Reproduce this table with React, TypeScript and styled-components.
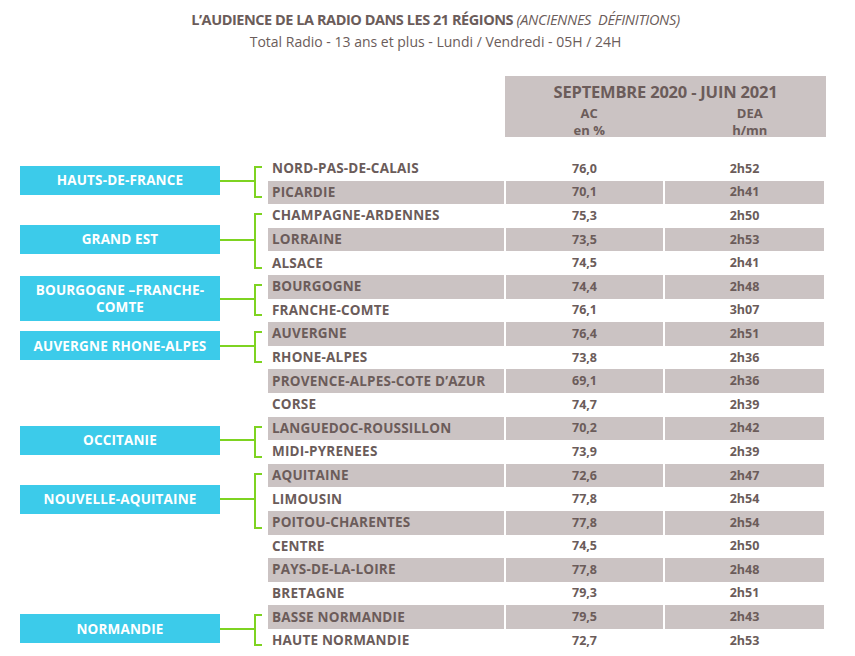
import React from "react";
import styled, { createGlobalStyle } from "styled-components";

const GlobalStyle = createGlobalStyle`
  body {
    margin: 0;
    background: #fff;
    font-family: "Open Sans", "Liberation Sans", sans-serif;
  }
`;

const TEXT = "#6b5c5a";
const GREY = "#cbc3c3";
const CYAN = "#3ccbea";
const GREEN = "#7ed321";

const Page = styled.div`
  width: 855px;
  height: 656px;
  overflow: hidden;
  color: ${TEXT};
`;

const Heading = styled.header`
  padding: 10px 0 0 16px;
  text-align: center;
`;

const Title = styled.h1`
  margin: 0;
  font-size: 14.5px;
  line-height: 20px;
  font-weight: 700;
  letter-spacing: -0.45px;
  em {
    font-weight: 400;
    letter-spacing: -0.3px;
  }
`;

const Subtitle = styled.p`
  margin: 2px 0 0;
  font-size: 14px;
  line-height: 20px;
  font-weight: 400;
`;

const Board = styled.div`
  display: grid;
  grid-template-columns: 200px 44px 236px 157px 159px;
  grid-template-rows: auto repeat(21, 23.6px);
  column-gap: 2px;
  padding: 24px 0 0 20px;
`;

const PeriodHead = styled.div`
  grid-column: 4 / span 2;
  grid-row: 1;
  margin: 0 -2px 20px -1px;
  height: 61px;
  background: ${GREY};
  display: grid;
  grid-template-columns: 1fr 1fr;
  align-content: start;
  padding-top: 5px;
  box-sizing: border-box;
  font-weight: 700;
`;

const PeriodTitle = styled.div`
  grid-column: 1 / span 2;
  text-align: center;
  font-size: 16.5px;
  line-height: 22px;
  letter-spacing: -0.2px;
`;

const Measure = styled.div`
  text-align: center;
  font-size: 13px;
  line-height: 17px;
  padding-left: 8px;
  margin-top: 2px;
`;

const RegionBox = styled.div<{ $row: number; $span: number }>`
  grid-column: 1;
  grid-row: ${(p) => p.$row} / span ${(p) => p.$span};
  align-self: center;
  min-height: 29px;
  padding: 6px 8px;
  box-sizing: border-box;
  background: ${CYAN};
  color: #fff;
  font-weight: 700;
  font-size: 13.5px;
  line-height: 16.5px;
  letter-spacing: 0.15px;
  display: flex;
  align-items: center;
  justify-content: center;
  text-align: center;
`;

const Connector = styled.div<{ $row: number; $span: number }>`
  grid-column: 2;
  grid-row: ${(p) => p.$row} / span ${(p) => p.$span};
  display: flex;
  margin-left: -2px;
`;

const Stem = styled.div`
  width: 34px;
  height: 2px;
  align-self: center;
  background: ${GREEN};
`;

const Bracket = styled.div`
  width: 6px;
  margin: 9px 0 6px;
  border: 2px solid ${GREEN};
  border-right: none;
`;

const Cell = styled.div<{ $row: number; $col: number; $shaded: boolean }>`
  grid-column: ${(p) => p.$col};
  grid-row: ${(p) => p.$row};
  background: ${(p) => (p.$shaded ? GREY : "transparent")};
  font-weight: 700;
  font-size: ${(p) => (p.$col === 3 ? "13.5px" : "12.5px")};
  letter-spacing: ${(p) => (p.$col === 3 ? "0.2px" : "0")};
  display: flex;
  align-items: center;
  padding-bottom: 1px;
  justify-content: ${(p) => (p.$col === 3 ? "flex-start" : "center")};
  padding-left: ${(p) => (p.$col === 3 ? "4px" : "0")};
`;

const rows: [string, string, string][] = [
  ["NORD-PAS-DE-CALAIS", "76,0", "2h52"],
  ["PICARDIE", "70,1", "2h41"],
  ["CHAMPAGNE-ARDENNES", "75,3", "2h50"],
  ["LORRAINE", "73,5", "2h53"],
  ["ALSACE", "74,5", "2h41"],
  ["BOURGOGNE", "74,4", "2h48"],
  ["FRANCHE-COMTE", "76,1", "3h07"],
  ["AUVERGNE", "76,4", "2h51"],
  ["RHONE-ALPES", "73,8", "2h36"],
  ["PROVENCE-ALPES-COTE D’AZUR", "69,1", "2h36"],
  ["CORSE", "74,7", "2h39"],
  ["LANGUEDOC-ROUSSILLON", "70,2", "2h42"],
  ["MIDI-PYRENEES", "73,9", "2h39"],
  ["AQUITAINE", "72,6", "2h47"],
  ["LIMOUSIN", "77,8", "2h54"],
  ["POITOU-CHARENTES", "77,8", "2h54"],
  ["CENTRE", "74,5", "2h50"],
  ["PAYS-DE-LA-LOIRE", "77,8", "2h48"],
  ["BRETAGNE", "79,3", "2h51"],
  ["BASSE NORMANDIE", "79,5", "2h43"],
  ["HAUTE NORMANDIE", "72,7", "2h53"],
];

const regions: { label: React.ReactNode; start: number; count: number }[] = [
  { label: "HAUTS-DE-FRANCE", start: 0, count: 2 },
  { label: "GRAND EST", start: 2, count: 3 },
  {
    label: (
      <>
        BOURGOGNE –FRANCHE-
        <br />
        COMTE
      </>
    ),
    start: 5,
    count: 2,
  },
  { label: "AUVERGNE RHONE-ALPES", start: 7, count: 2 },
  { label: "OCCITANIE", start: 11, count: 2 },
  { label: "NOUVELLE-AQUITAINE", start: 13, count: 3 },
  { label: "NORMANDIE", start: 19, count: 2 },
];

function App() {
  return (
    <Page>
      <GlobalStyle />
      <Heading>
        <Title>
          L’AUDIENCE DE LA RADIO DANS LES 21 RÉGIONS <em>(ANCIENNES&nbsp; DÉFINITIONS)</em>
        </Title>
        <Subtitle>Total Radio - 13 ans et plus - Lundi / Vendredi - 05H / 24H</Subtitle>
      </Heading>

      <Board>
        <PeriodHead>
          <PeriodTitle>SEPTEMBRE 2020 - JUIN 2021</PeriodTitle>
          <Measure>
            AC
            <br />
            en %
          </Measure>
          <Measure>
            DEA
            <br />
            h/mn
          </Measure>
        </PeriodHead>

        {regions.map((r, i) => (
          <React.Fragment key={i}>
            <RegionBox $row={r.start + 2} $span={r.count}>
              <span>{r.label}</span>
            </RegionBox>
            <Connector $row={r.start + 2} $span={r.count}>
              <Stem />
              <Bracket />
            </Connector>
          </React.Fragment>
        ))}

        {rows.map(([name, ac, dea], i) => {
          const shaded = i % 2 === 1;
          return (
            <React.Fragment key={name}>
              <Cell $row={i + 2} $col={3} $shaded={shaded}>
                {name}
              </Cell>
              <Cell $row={i + 2} $col={4} $shaded={shaded}>
                {ac}
              </Cell>
              <Cell $row={i + 2} $col={5} $shaded={shaded}>
                {dea}
              </Cell>
            </React.Fragment>
          );
        })}
      </Board>
    </Page>
  );
}

export default App;
